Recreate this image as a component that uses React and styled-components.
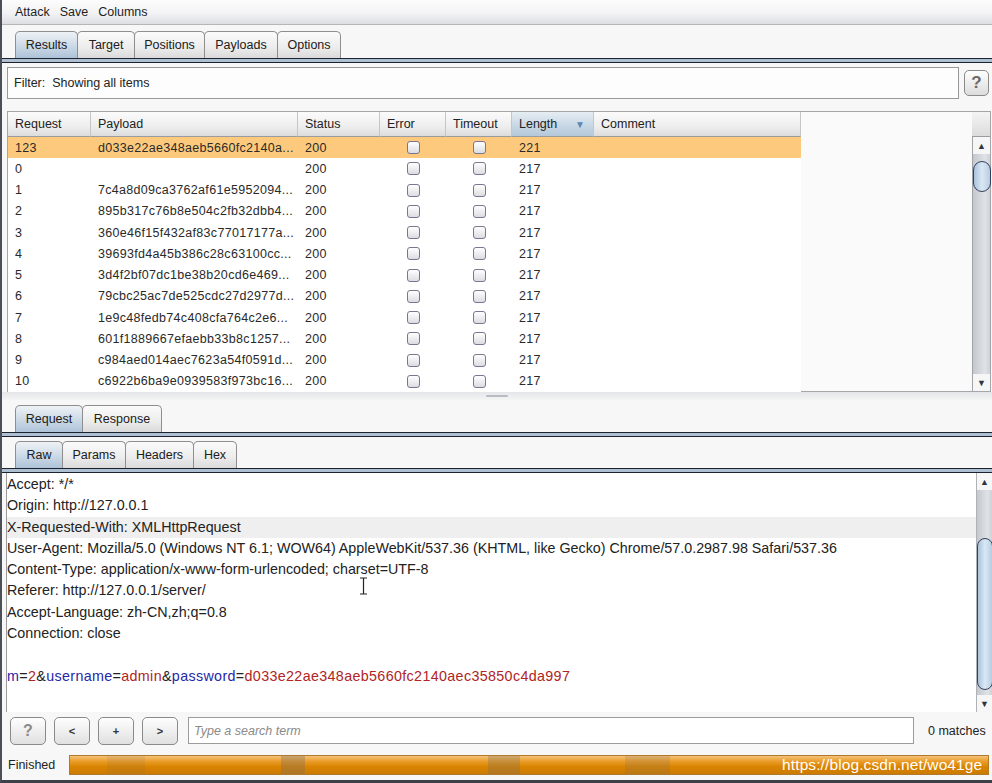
import React from 'react';
import styled, { createGlobalStyle } from 'styled-components';

const GlobalStyle = createGlobalStyle`
  html, body {
    margin: 0;
    padding: 0;
    background: #f7f7f7;
  }
  * {
    box-sizing: border-box;
  }
`;

const Window = styled.div`
  width: 992px;
  height: 783px;
  display: flex;
  flex-direction: column;
  background: #f7f7f7;
  border-left: 2px solid #4a4f58;
  border-bottom: 3px solid #3c4048;
  font-family: "Liberation Sans", Arial, sans-serif;
  font-size: 12.5px;
  color: #222;
  overflow: hidden;
  position: relative;
`;

const MenuBar = styled.div`
  height: 25px;
  flex: none;
  display: flex;
  align-items: center;
  gap: 10px;
  padding-left: 13px;
  background: linear-gradient(#fcfcfc, #f3f3f5 55%, #dcdee3);
  border-bottom: 1px solid #b4b6ba;
`;

const MenuItem = styled.span`
  color: #1e1e1e;
`;

const TabStrip = styled.div`
  flex: none;
  display: flex;
  align-items: flex-end;
  height: ${p => p.$h}px;
  padding-left: 13px;
`;

const Tab = styled.div`
  width: ${p => p.$w}px;
  height: 27px;
  display: flex;
  align-items: center;
  justify-content: center;
  border: 1px solid #8e8e8e;
  border-bottom: none;
  border-radius: 5px 5px 0 0;
  margin-right: -1px;
  color: #202020;
  background: ${p =>
    p.$active
      ? 'linear-gradient(#eef2f6, #c8d6e4 60%, #aec3d8)'
      : 'linear-gradient(#fbfbfb, #ececec 60%, #dadada)'};
`;

const SplitLine = styled.div`
  flex: none;
  height: 5px;
  border-top: 1px solid #1c2330;
  border-bottom: 1px solid #1c2330;
  background: #aebfd2;
`;

const FilterRow = styled.div`
  flex: none;
  height: 48px;
  display: flex;
  align-items: flex-start;
  gap: 5px;
  padding: 4px 0 0 5px;
`;

const FilterBox = styled.div`
  width: 952px;
  height: 32px;
  display: flex;
  align-items: center;
  padding-left: 6px;
  background: #fdfdfd;
  border: 1px solid #999;
`;

const HelpButton = styled.div`
  width: 25px;
  height: 26px;
  margin-top: 3px;
  display: flex;
  align-items: center;
  justify-content: center;
  border: 1px solid #8a8a8a;
  border-radius: 5px;
  background: linear-gradient(#fefefe, #dcdcdc);
  color: #6a6a6a;
  font-weight: bold;
  font-size: 17px;
`;

const TableFrame = styled.div`
  flex: none;
  height: 281px;
  margin-left: 5px;
  width: 984px;
  display: flex;
  border: 1px solid #a4a6aa;
  background: #fafafa;
`;

const TableMain = styled.div`
  flex: 1;
  display: flex;
  flex-direction: column;
`;

const COLS = '83px 207px 82px 66px 66px 82px 207px';

const HeaderRow = styled.div`
  height: 25px;
  flex: none;
  display: grid;
  grid-template-columns: ${COLS};
`;

const HeaderCell = styled.div`
  display: flex;
  align-items: center;
  justify-content: space-between;
  padding: 0 8px 0 7px;
  border-right: 1px solid #c4c6ca;
  border-bottom: 1px solid #9a9ca0;
  color: #222;
  background: ${p =>
    p.$sorted
      ? 'linear-gradient(#e6edf3, #c6d6e4 60%, #b4c8da)'
      : 'linear-gradient(#fbfbfb, #eeeeee 60%, #dcdcdc)'};
`;

const SortArrow = styled.span`
  color: #5d88b4;
  font-size: 10px;
`;

const Row = styled.div`
  height: 21.25px;
  flex: none;
  display: grid;
  grid-template-columns: ${COLS};
  width: 793px;
  background: ${p => (p.$selected ? '#fdca7d' : '#ffffff')};
`;

const Cell = styled.div`
  display: flex;
  align-items: center;
  justify-content: ${p => (p.$center ? 'center' : 'flex-start')};
  padding-left: ${p => (p.$center ? 0 : 7)}px;
  white-space: nowrap;
  overflow: hidden;
  letter-spacing: 0.3px;
  color: #2a2a2a;
`;

const Check = styled.span`
  width: 13px;
  height: 13px;
  border: 1px solid #7c7590;
  border-radius: 3px;
  background: linear-gradient(#ffffff, #dcdde2);
`;

const ScrollCol = styled.div`
  width: 18px;
  flex: none;
  display: flex;
  flex-direction: column;
`;

const ScrollCorner = styled.div`
  height: 25px;
  flex: none;
  background: linear-gradient(#f4f4f4, #dcdcdc);
  border-bottom: 1px solid #9a9ca0;
`;

const ScrollTrack = styled.div`
  flex: 1;
  display: flex;
  flex-direction: column;
  border-left: 1px solid #a0a2a6;
  background: linear-gradient(to right, #c4c8ce, #dfe2e6 70%, #cfd2d6);
`;

const ScrollArrow = styled.div`
  height: 17px;
  flex: none;
  display: flex;
  align-items: center;
  justify-content: center;
  font-size: 9px;
  color: #2e3440;
  background: #f6f6f6;
`;

const ScrollLane = styled.div`
  flex: 1;
  display: flex;
  flex-direction: column;
`;

const Thumb = styled.div`
  margin-top: ${p => p.$top}px;
  height: ${p => p.$h}px;
  margin-right: -1px;
  border: 1px solid #34405a;
  border-radius: 9px;
  background: linear-gradient(to right, #a9c2dc, #dbe8f4 50%, #b7cde2);
`;

const Divider = styled.div`
  flex: none;
  height: 8px;
  display: flex;
  justify-content: center;
  padding-top: 3px;
  background: linear-gradient(#e4e6e9, #f4f4f4);
`;

const Grip = styled.div`
  width: 22px;
  height: 2px;
  border-radius: 1px;
  background: #b8bcc2;
`;

const Editor = styled.div`
  flex: none;
  height: 239px;
  margin-left: 4px;
  display: flex;
  background: #ffffff;
  border-left: 1px solid #9a9a9a;
  position: relative;
`;

const EditorText = styled.div`
  flex: 1;
  padding-top: 1px;
  font-size: 14.3px;
`;

const Line = styled.div`
  height: 21.3px;
  line-height: 21.3px;
  padding-left: 0;
  white-space: nowrap;
  color: #222;
  letter-spacing: ${p => (p.$wide ? 0.35 : 0)}px;
  background: ${p => (p.$hl ? '#efefef' : 'transparent')};
`;

const Key = styled.span`
  color: #2727a8;
`;

const Val = styled.span`
  color: #b02424;
`;

const EditorScroll = styled(ScrollTrack)`
  width: 16px;
  flex: none;
  border-left: 1px solid #b0b2b6;
`;

const IBeam = styled.svg`
  position: absolute;
  left: 352px;
  top: 104px;
`;

const SearchBar = styled.div`
  flex: none;
  height: 38px;
  display: flex;
  align-items: flex-start;
  padding: 5px 0 0 8px;
  gap: 8px;
`;

const NavButton = styled.div`
  width: 36px;
  height: 28px;
  flex: none;
  display: flex;
  align-items: center;
  justify-content: center;
  border: 1px solid #8a8a8a;
  border-radius: 5px;
  background: linear-gradient(#fefefe, #e0e0e0);
  color: ${p => (p.$help ? '#8a8a8a' : '#333')};
  font-size: ${p => (p.$help ? 16 : 11)}px;
  font-weight: bold;
`;

const SearchInput = styled.div`
  width: 726px;
  height: 27px;
  margin-left: 2px;
  display: flex;
  align-items: center;
  padding-left: 5px;
  background: #fff;
  border: 1px solid #9c9c9c;
  color: #8a8a8a;
  font-style: italic;
`;

const Matches = styled.div`
  height: 27px;
  display: flex;
  align-items: center;
  margin-left: 6px;
  color: #222;
`;

const StatusRow = styled.div`
  flex: none;
  height: 30px;
  display: flex;
  align-items: center;
  padding-left: 6px;
  gap: 14px;
`;

const Progress = styled.div`
  width: 920px;
  height: 20px;
  position: relative;
  display: flex;
  align-items: center;
  justify-content: flex-end;
  padding-right: 6px;
  border: 1px solid #b07a2c;
  background: linear-gradient(#f5c27a, #ea9c28 30%, #d98400 60%, #cc7a00);
  overflow: hidden;
`;

const Glint = styled.span`
  position: absolute;
  top: 0;
  bottom: 0;
  left: ${p => p.$x}px;
  width: ${p => p.$w}px;
  background: rgba(120, 110, 100, ${p => p.$a});
`;

const Watermark = styled.span`
  position: relative;
  color: #ffffff;
  font-size: 15.5px;
  letter-spacing: 0.1px;
`;

const rows = [
  ['123', 'd033e22ae348aeb5660fc2140a...', '221', true],
  ['0', '', '217'],
  ['1', '7c4a8d09ca3762af61e5952094...', '217'],
  ['2', '895b317c76b8e504c2fb32dbb4...', '217'],
  ['3', '360e46f15f432af83c77017177a...', '217'],
  ['4', '39693fd4a45b386c28c63100cc...', '217'],
  ['5', '3d4f2bf07dc1be38b20cd6e469...', '217'],
  ['6', '79cbc25ac7de525cdc27d2977d...', '217'],
  ['7', '1e9c48fedb74c408cfa764c2e6...', '217'],
  ['8', '601f1889667efaebb33b8c1257...', '217'],
  ['9', 'c984aed014aec7623a54f0591d...', '217'],
  ['10', 'c6922b6ba9e0939583f973bc16...', '217'],
];

const headers = [
  'Accept: */*',
  'Origin: http://127.0.0.1',
  'X-Requested-With: XMLHttpRequest',
  'User-Agent: Mozilla/5.0 (Windows NT 6.1; WOW64) AppleWebKit/537.36 (KHTML, like Gecko) Chrome/57.0.2987.98 Safari/537.36',
  'Content-Type: application/x-www-form-urlencoded; charset=UTF-8',
  'Referer: http://127.0.0.1/server/',
  'Accept-Language: zh-CN,zh;q=0.8',
  'Connection: close',
];

const Scrollbar = ({ top, h }) => (
  <>
    <ScrollArrow>▲</ScrollArrow>
    <ScrollLane>
      <Thumb $top={top} $h={h} />
    </ScrollLane>
    <ScrollArrow>▼</ScrollArrow>
  </>
);

export default function App() {
  return (
    <>
      <GlobalStyle />
      <Window>
        <MenuBar>
          <MenuItem>Attack</MenuItem>
          <MenuItem>Save</MenuItem>
          <MenuItem>Columns</MenuItem>
        </MenuBar>

        <TabStrip $h={33}>
          <Tab $w={63} $active>Results</Tab>
          <Tab $w={58}>Target</Tab>
          <Tab $w={71}>Positions</Tab>
          <Tab $w={74}>Payloads</Tab>
          <Tab $w={64}>Options</Tab>
        </TabStrip>
        <SplitLine />

        <FilterRow>
          <FilterBox>Filter:&nbsp; Showing all items</FilterBox>
          <HelpButton>?</HelpButton>
        </FilterRow>

        <TableFrame>
          <TableMain>
            <HeaderRow>
              <HeaderCell>Request</HeaderCell>
              <HeaderCell>Payload</HeaderCell>
              <HeaderCell>Status</HeaderCell>
              <HeaderCell>Error</HeaderCell>
              <HeaderCell>Timeout</HeaderCell>
              <HeaderCell $sorted>
                Length <SortArrow>▼</SortArrow>
              </HeaderCell>
              <HeaderCell>Comment</HeaderCell>
            </HeaderRow>
            {rows.map(([req, payload, len, sel]) => (
              <Row key={req} $selected={sel}>
                <Cell>{req}</Cell>
                <Cell>{payload}</Cell>
                <Cell>200</Cell>
                <Cell $center><Check /></Cell>
                <Cell $center><Check /></Cell>
                <Cell>{len}</Cell>
                <Cell />
              </Row>
            ))}
          </TableMain>
          <ScrollCol>
            <ScrollCorner />
            <ScrollTrack>
              <Scrollbar top={7} h={31} />
            </ScrollTrack>
          </ScrollCol>
        </TableFrame>

        <Divider>
          <Grip />
        </Divider>

        <TabStrip $h={32}>
          <Tab $w={68} $active>Request</Tab>
          <Tab $w={80}>Response</Tab>
        </TabStrip>
        <SplitLine />

        <TabStrip $h={31}>
          <Tab $w={48} $active>Raw</Tab>
          <Tab $w={64}>Params</Tab>
          <Tab $w={69}>Headers</Tab>
          <Tab $w={44}>Hex</Tab>
        </TabStrip>
        <SplitLine />

        <Editor>
          <EditorText>
            {headers.map((h, i) => (
              <Line key={h} $hl={i === 2}>{h}</Line>
            ))}
            <Line />
            <Line $wide>
              <Key>m</Key>=<Val>2</Val>&amp;<Key>username</Key>=<Val>admin</Val>&amp;
              <Key>password</Key>=<Val>d033e22ae348aeb5660fc2140aec35850c4da997</Val>
            </Line>
          </EditorText>
          <EditorScroll>
            <Scrollbar top={48} h={152} />
          </EditorScroll>
          <IBeam width="9" height="18" viewBox="0 0 9 18">
            <path d="M1 1h7M4.5 1v16M1 17h7" stroke="#222" strokeWidth="1.2" fill="none" />
          </IBeam>
        </Editor>

        <SearchBar>
          <NavButton $help>?</NavButton>
          <NavButton>&lt;</NavButton>
          <NavButton>+</NavButton>
          <NavButton>&gt;</NavButton>
          <SearchInput>Type a search term</SearchInput>
          <Matches>0 matches</Matches>
        </SearchBar>

        <StatusRow>
          <span>Finished</span>
          <Progress>
            <Glint $x={37} $w={38} $a={0.12} />
            <Glint $x={211} $w={24} $a={0.35} />
            <Glint $x={418} $w={32} $a={0.3} />
            <Glint $x={555} $w={45} $a={0.2} />
            <Watermark>https://blog.csdn.net/wo41ge</Watermark>
          </Progress>
        </StatusRow>
      </Window>
    </>
  );
}
